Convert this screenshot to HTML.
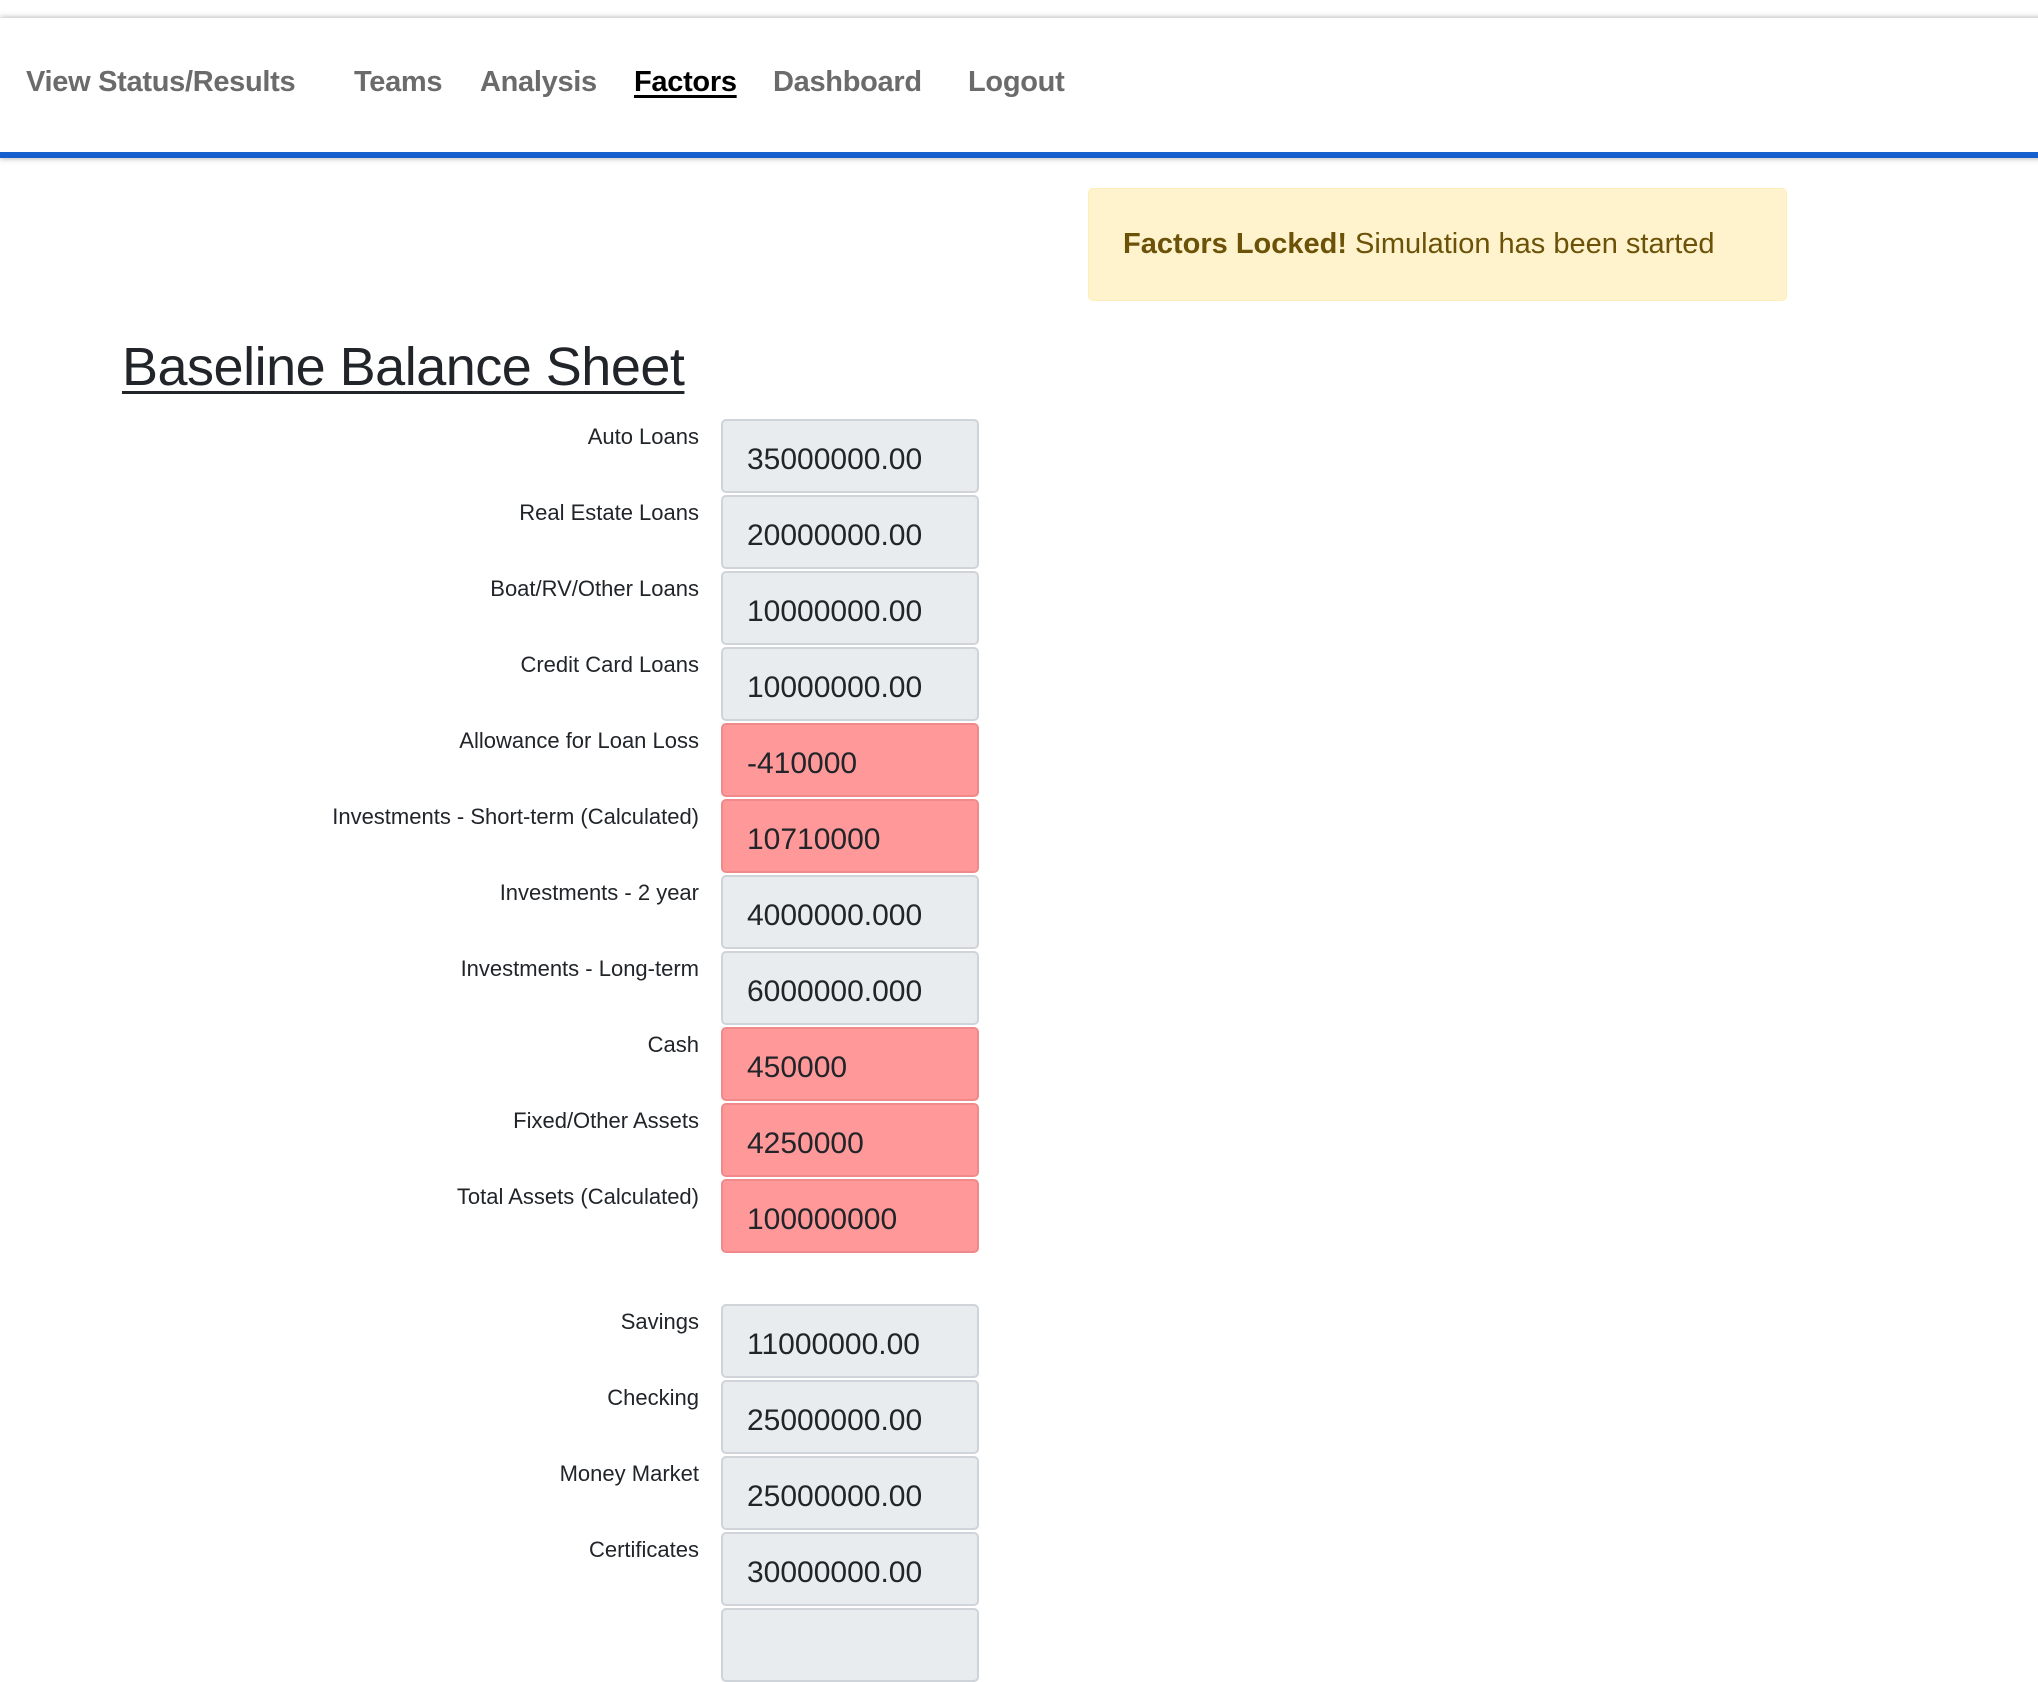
<!DOCTYPE html>
<html><head><meta charset="utf-8"><style>
body{margin:0;width:2038px;height:1610px;overflow:hidden;background:#fff;font-family:"Liberation Sans",sans-serif;position:relative}
.nav{position:absolute;left:0;top:18px;width:2060px;height:134px;background:#fff;box-shadow:0 0 6px rgba(0,0,0,.35);border-bottom:6px solid #1560cc}
.nav a{position:absolute;top:48px;font-size:29px;font-weight:bold;color:#6b6b6b;text-decoration:none;letter-spacing:-0.3px}
.nav a.act{color:#000;text-decoration:underline;text-decoration-thickness:3px;text-underline-offset:4px}
.alert{position:absolute;left:1088px;top:188px;width:699px;height:113px;background:#fff3cd;border:1px solid #ffeeba;border-radius:5px;box-sizing:border-box;color:#6b5208;font-size:29px;line-height:111px;padding-left:34px;white-space:nowrap}
h1{position:absolute;left:122px;top:336px;margin:0;font-size:54px;font-weight:normal;color:#212529;text-decoration:underline;text-decoration-thickness:3px;text-underline-offset:6px;letter-spacing:-0.5px}
.lbl{position:absolute;right:1339px;font-size:22px;color:#212529;white-space:nowrap}
.inp{position:absolute;left:721px;width:258px;height:74px;box-sizing:border-box;background:#e9ecef;border:2px solid #ced4da;border-radius:5px;font-size:30px;color:#212529;padding:22px 0 0 24px}
.red{background:#ff9999;border-color:#f08a8a}
</style></head><body>
<div class="nav">
<a style="left:26px">View Status/Results</a>
<a style="left:354px">Teams</a>
<a style="left:480px">Analysis</a>
<a class="act" style="left:634px">Factors</a>
<a style="left:773px">Dashboard</a>
<a style="left:968px">Logout</a>
</div>
<div class="alert"><b>Factors Locked!</b> Simulation has been started</div>
<h1>Baseline Balance Sheet</h1>

<div class="lbl" style="top:424px">Auto Loans</div><div class="inp" style="top:419px">35000000.00</div>
<div class="lbl" style="top:500px">Real Estate Loans</div><div class="inp" style="top:495px">20000000.00</div>
<div class="lbl" style="top:576px">Boat/RV/Other Loans</div><div class="inp" style="top:571px">10000000.00</div>
<div class="lbl" style="top:652px">Credit Card Loans</div><div class="inp" style="top:647px">10000000.00</div>
<div class="lbl" style="top:728px">Allowance for Loan Loss</div><div class="inp red" style="top:723px">-410000</div>
<div class="lbl" style="top:804px">Investments - Short-term (Calculated)</div><div class="inp red" style="top:799px">10710000</div>
<div class="lbl" style="top:880px">Investments - 2 year</div><div class="inp" style="top:875px">4000000.000</div>
<div class="lbl" style="top:956px">Investments - Long-term</div><div class="inp" style="top:951px">6000000.000</div>
<div class="lbl" style="top:1032px">Cash</div><div class="inp red" style="top:1027px">450000</div>
<div class="lbl" style="top:1108px">Fixed/Other Assets</div><div class="inp red" style="top:1103px">4250000</div>
<div class="lbl" style="top:1184px">Total Assets (Calculated)</div><div class="inp red" style="top:1179px">100000000</div>

<div class="lbl" style="top:1309px">Savings</div><div class="inp" style="top:1304px">11000000.00</div>
<div class="lbl" style="top:1385px">Checking</div><div class="inp" style="top:1380px">25000000.00</div>
<div class="lbl" style="top:1461px">Money Market</div><div class="inp" style="top:1456px">25000000.00</div>
<div class="lbl" style="top:1537px">Certificates</div><div class="inp" style="top:1532px">30000000.00</div>
<div class="inp" style="top:1608px"></div>
</body></html>
